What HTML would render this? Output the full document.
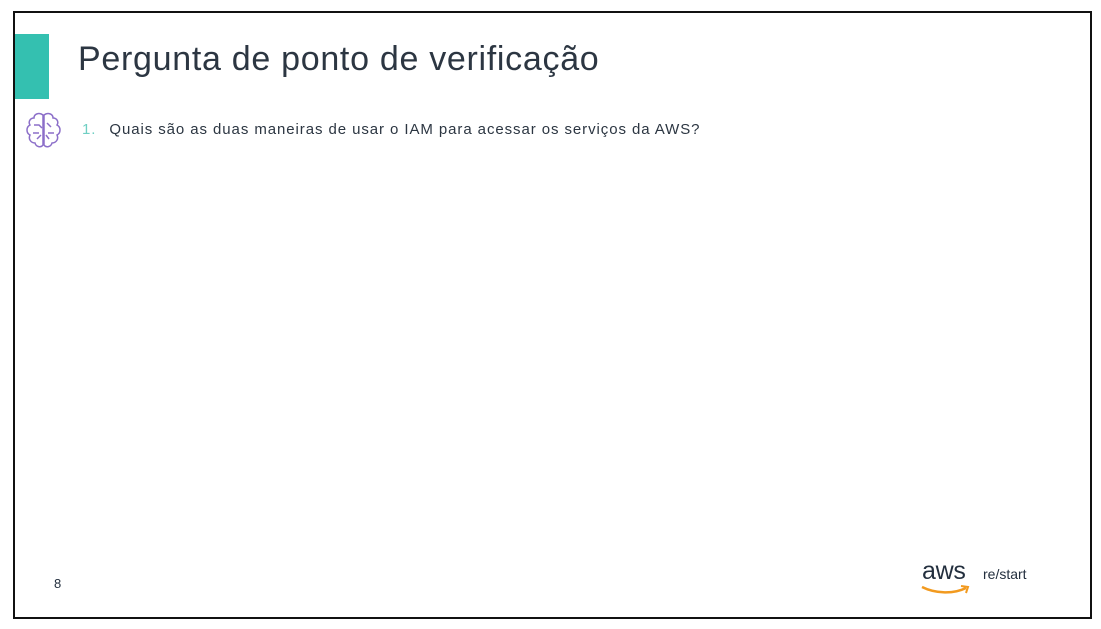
<!DOCTYPE html>
<html><head><meta charset="utf-8"><style>
body{margin:0;width:1101px;height:629px;background:#fff;position:relative;overflow:hidden;font-family:"Liberation Sans",sans-serif;}
.frame{position:absolute;left:13px;top:11px;width:1075px;height:604px;border:2px solid #111;}
.bar{position:absolute;left:15px;top:34px;width:34px;height:65px;background:#34c0b0;}
.title{position:absolute;left:78px;top:40px;font-size:34px;color:#2c3642;letter-spacing:0.7px;}
.q{position:absolute;left:82px;top:121px;font-size:15px;color:#2c3642;letter-spacing:0.92px;}
.q span{color:#6fcfc3;margin-right:13px;}
.num{position:absolute;left:54px;top:576px;font-size:13px;color:#232f3e;}
.aws{position:absolute;left:922px;top:557px;font-size:25px;color:#232f3e;letter-spacing:-0.3px;}
.rs{position:absolute;left:983px;top:566px;font-size:14px;color:#232f3e;}
</style></head><body>
<div class="frame"></div>
<div class="bar"></div>
<div class="title">Pergunta de ponto de verificação</div>
<svg style="position:absolute;left:25px;top:111px" width="37" height="39" viewBox="0 0 37 39" fill="none" stroke="#8c6fc9" stroke-width="1.5">
<path d="M18 4 C14 1 9 3 9 7 C5 7 3 11 5 14 C1 16 1 22 5 24 C3 28 6 32 10 32 C11 36 16 37 18 34 Z"/>
<path d="M19 4 C23 1 28 3 28 7 C32 7 34 11 32 14 C36 16 36 22 32 24 C34 28 31 32 27 32 C26 36 21 37 19 34 Z"/>
<path d="M9 14 h5 l3 3 M8 22 h6 M12 28 l4-4 M22 12 l4 4 M23 22 h6 M24 28 l-3-4"/>
</svg>
<div class="q"><span>1.</span>Quais são as duas maneiras de usar o IAM para acessar os serviços da AWS?</div>
<div class="num">8</div>
<div class="aws">aws</div>
<svg style="position:absolute;left:920px;top:584px" width="52" height="14" viewBox="0 0 52 14"><path d="M2 3 C16 10 34 10 46 4" stroke="#f29a1f" stroke-width="2.5" fill="none"/><path d="M41 2 L48 3 L46 9" stroke="#f29a1f" stroke-width="2" fill="none"/></svg>
<div class="rs">re/start</div>
</body></html>
